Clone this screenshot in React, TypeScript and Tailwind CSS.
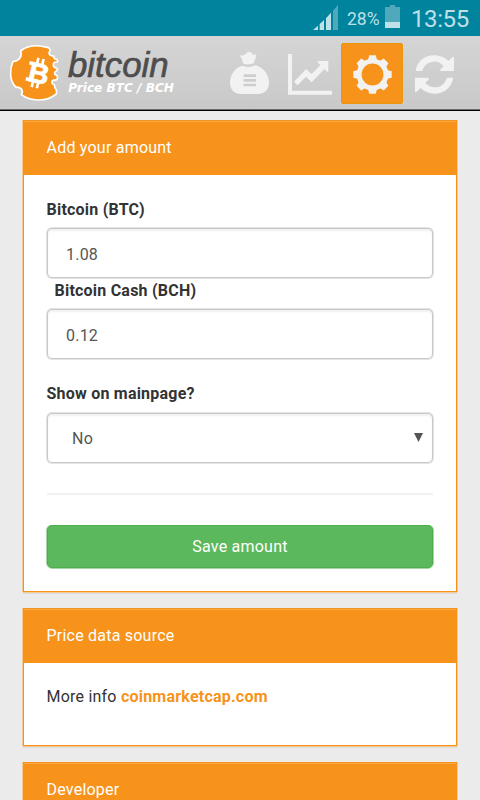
import React, { useState } from "react";
import clsx from "clsx";

const NAV_ITEMS = [
  { id: "amount", label: "Amount" },
  { id: "chart", label: "Chart" },
  { id: "settings", label: "Settings" },
  { id: "refresh", label: "Refresh" },
];

const GEAR_TEETH = [0, 45, 90, 135, 180, 225, 270, 315];

const StatusBar = () => (
  <div className="flex h-9 items-center justify-end bg-[#00839d] pr-3 text-[#bfe0e7]">
    <svg width="25" height="25" viewBox="0 0 75 75" className="mb-px mr-[9px]">
      <path d="M0 75 15 62V75Z M20 57 33 45V75H20Z M39 40 54 23V75H39Z" fill="#bfe0e7" />
      <path d="M60 17 75 0V75H60Z" fill="#4fa9ba" />
    </svg>
    <span className="w-[33px] whitespace-nowrap pt-[2px] text-[17.5px] leading-[34px]">28%</span>
    <svg width="15" height="23" viewBox="0 0 45 69" className="mb-[3px] ml-[5px]">
      <path d="M0 6H15V0H30V6H45V69H0Z" fill="#4fa9ba" />
      <path d="M0 51H45V69H0Z" fill="#bfe0e7" />
    </svg>
    <span className="ml-[11px] w-[57px] whitespace-nowrap pt-[2px] text-[24px] leading-[34px] tracking-[-0.4px]">
      13:55
    </span>
  </div>
);

const Logo = () => (
  <svg width="180" height="73" viewBox="0 0 540 219" className="shrink-0">
    <path
      d="M62 45C82 29 112 26 142 34Q151 37 150 45Q145 50 149 56Q155 61 162 60Q160 68 167 69Q175 71 172 78Q160 77 160 86Q160 94 168 96Q176 99 169 105Q161 109 165 116Q175 118 172 128Q168 134 161 132Q152 137 158 144Q167 147 164 155Q172 162 169 174Q145 193 114 192Q84 191 64 176Q70 168 64 159Q56 152 48 154Q31 137 32 112Q31 94 39 76Q51 77 60 66Q66 55 62 45Z"
      fill="#f7931a"
      stroke="#fff"
      strokeWidth="5"
      strokeLinejoin="round"
    />
    <g transform="rotate(13 112 111)" fill="#fff">
      <text
        x="86"
        y="140"
        fontFamily="Liberation Sans"
        fontWeight="700"
        fontSize="84"
        textLength="62"
        lengthAdjust="spacingAndGlyphs"
        stroke="#fff"
        strokeWidth="2"
      >
        B
      </text>
      <path d="M82 81h14v11h-14zM82 130h14v11h-14z" />
      <path d="M101 66h8v18h-8zM117 66h8v18h-8zM101 138h8v18h-8zM117 138h8v18h-8z" />
    </g>
    <text
      x="204"
      y="124"
      fontFamily="Liberation Sans"
      fontStyle="italic"
      fontSize="106"
      textLength="302"
      lengthAdjust="spacingAndGlyphs"
      fill="#4d4d4d"
      stroke="#4d4d4d"
      strokeWidth="2"
    >
      bitcoin
    </text>
    <text
      x="205"
      y="167"
      fontFamily="DejaVu Sans"
      fontWeight="700"
      fontStyle="italic"
      fontSize="36"
      textLength="317"
      lengthAdjust="spacingAndGlyphs"
      fill="#fff"
    >
      Price BTC / BCH
    </text>
  </svg>
);

const NavIcon = ({ id }: { id: string }) => {
  if (id === "amount") {
    return (
      <svg width="39" height="43" viewBox="0 0 117 129" fill="#f2f2f2" className="mb-[3px]">
        <path d="M29 13Q39 15 46 10Q54-3 64 5Q70 16 79 8L77 20L71 37Q55 43 40 38Q38 25 29 13Z" />
        <path
          fillRule="evenodd"
          d="M38 44Q57 52 76 43C101 50 116 70 117 94C117 118 103 129 82 129H34C13 129 0 117 0 94C1 70 15 49 38 44ZM41 70V78H78V70ZM41 84V92H78V84ZM41 98V106H78V98Z"
        />
      </svg>
    );
  }
  if (id === "chart") {
    return (
      <svg width="44" height="41" viewBox="0 0 132 123" fill="#f2f2f2" className="mr-[2px] mt-[2px]">
        <path d="M0 0H12V110H132V122H0Z" />
        <path d="M18 83 54 45 71 60 97 33 88 23 91 21H121V50L118 54 109 45 71 85 54 68 29 94Z" />
      </svg>
    );
  }
  if (id === "settings") {
    return (
      <svg width="39" height="39" viewBox="0 0 118 118" fill="#f2f2f2" className="mt-px">
        <circle cx="59" cy="59" r="40.5" fill="none" stroke="#f2f2f2" strokeWidth="15" />
        {GEAR_TEETH.map((angle) => (
          <path key={angle} d="M40 18 46 13 49 1H69L72 13 78 18Z" transform={`rotate(${angle} 59 59)`} />
        ))}
      </svg>
    );
  }
  return (
    <svg width="39" height="39" viewBox="0 0 117 117" fill="#f2f2f2" className="mt-[2px]">
      <path d="M2 48C6 20 28 1 57 1C75 1 91 8 100 18L113 6Q117 4 117 9V48H80Q73 48 77 42L86 33C76 23 66 19 56 20C39 21 28 29 21 48Z" />
      <path d="M115 68C110 96 88 116 59 116C42 116 27 109 17 99L4 111Q0 114 0 109V68H37Q44 69 41 74L31 84C41 94 50 97 61 97C77 96 89 87 96 68Z" />
    </svg>
  );
};

const Panel = ({ title, className, children }: { title: string; className?: string; children?: React.ReactNode }) => (
  <section
    className={clsx(
      "mx-[23px] border border-[#f7931a] bg-white shadow-[1px_0_0_#f4c893,-1px_0_0_#f4c893,0_1px_0_#f4c893,0_2px_1px_rgba(0,0,0,0.06)]",
      className,
    )}
  >
    <h2 className="h-[54px] border-t border-[#f9a848] bg-[#f7931a] pl-[22.5px] leading-[52px] text-white">{title}</h2>
    <div className="px-[23px]">{children}</div>
  </section>
);

const INPUT_CLASS =
  "block w-full rounded-[5px] border border-[#c8c8c8] bg-white pl-[18px] pt-[2px] text-[#555] shadow-[0_0_0_1px_#e4e4e4,inset_0_2px_2px_rgba(0,0,0,0.06)] outline-none";

const LABEL_CLASS = "-ml-[0.5px] block font-bold";

const App = () => {
  const [active, setActive] = useState("settings");
  const [btc, setBtc] = useState("1.08");
  const [bch, setBch] = useState("0.12");

  return (
    <div className="h-[800px] w-[480px] overflow-hidden bg-[#ebebeb] font-['Roboto',sans-serif] text-[16px] leading-6 text-[#333]">
      <StatusBar />
      <header className="flex h-[74px] border-b border-[#6a6a6a] bg-linear-to-b from-[#d5d5d5] to-[#c9c9c9]">
        <Logo />
        <nav className="ml-[39px] flex pt-[7px]">
          {NAV_ITEMS.map((item) => (
            <button
              key={item.id}
              aria-label={item.label}
              onClick={() => setActive(item.id)}
              className={clsx(
                "flex h-[61px] items-center justify-center rounded-[2px]",
                item.id === "amount" && "w-[61px]",
                item.id === "chart" && "w-[61px]",
                item.id === "settings" && "w-[62px]",
                item.id === "refresh" && "w-[62px]",
                active === item.id && "border border-[#e8960c] bg-[#f7931a]",
              )}
            >
              <NavIcon id={item.id} />
            </button>
          ))}
        </nav>
      </header>

      <main className="border-t border-black pt-[9px] tracking-[0.22px]">
        <Panel title="Add your amount" className="h-[472px]">
          <label className={clsx(LABEL_CLASS, "pt-[23px]")}>Bitcoin (BTC)</label>
          <input className={clsx(INPUT_CLASS, "mt-[6px] h-[50px]")} value={btc} onChange={(e) => setBtc(e.target.value)} />
          <label className={clsx(LABEL_CLASS, "pl-2 pt-px")}>Bitcoin Cash (BCH)</label>
          <input className={clsx(INPUT_CLASS, "mt-[6px] h-[50px]")} value={bch} onChange={(e) => setBch(e.target.value)} />
          <label className={clsx(LABEL_CLASS, "mt-[23px]")}>Show on mainpage?</label>
          <button className={clsx(INPUT_CLASS, "mt-[7px] h-[50px] !flex items-center justify-between pr-[9px]")}>
            <span className="pl-[6px]">No</span>
            <svg width="9" height="9" viewBox="0 0 9 9" fill="#555" className="mb-[3px]">
              <path d="M0 0H9L4.5 9Z" />
            </svg>
          </button>
          <hr className="mt-[30px] border-t-2 border-[#f1f1f1]" />
          <button className="mt-[30px] block h-[43px] w-full rounded-[5px] border border-[#4cae4c] bg-[#5cb85c] text-center text-white shadow-[-1px_0_0_#a5d6a5,1px_0_0_#a5d6a5,0_1px_0_#a5d6a5]">
            Save amount
          </button>
        </Panel>

        <Panel title="Price data source" className="mt-[16px] h-[138px]">
          <p className="-ml-[0.5px] pt-[22px]">
            More info <a className="font-bold text-[#f7931a]">coinmarketcap.com</a>
          </p>
        </Panel>

        <Panel title="Developer" className="mt-[16px] h-[140px]" />
      </main>
    </div>
  );
};

export default App;
